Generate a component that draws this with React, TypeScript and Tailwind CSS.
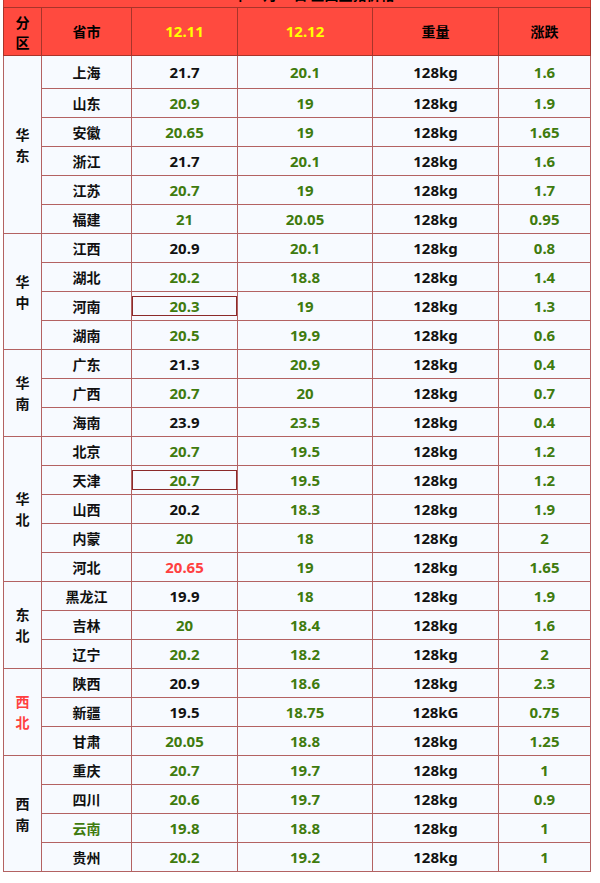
import React from "react";

type Row = { p: string; a: string; b: string; w: string; c: string; aColor?: "k" | "g" | "r"; pGreen?: boolean; boxed?: boolean };
type Region = { name: string; red?: boolean; rows: Row[] };

const regions: Region[] = [
  {
    name: "华东",
    rows: [
      { p: "上海", a: "21.7", b: "20.1", w: "128kg", c: "1.6", aColor: "k" },
      { p: "山东", a: "20.9", b: "19", w: "128kg", c: "1.9" },
      { p: "安徽", a: "20.65", b: "19", w: "128kg", c: "1.65" },
      { p: "浙江", a: "21.7", b: "20.1", w: "128kg", c: "1.6", aColor: "k" },
      { p: "江苏", a: "20.7", b: "19", w: "128kg", c: "1.7" },
      { p: "福建", a: "21", b: "20.05", w: "128kg", c: "0.95" },
    ],
  },
  {
    name: "华中",
    rows: [
      { p: "江西", a: "20.9", b: "20.1", w: "128kg", c: "0.8", aColor: "k" },
      { p: "湖北", a: "20.2", b: "18.8", w: "128kg", c: "1.4" },
      { p: "河南", a: "20.3", b: "19", w: "128kg", c: "1.3", boxed: true },
      { p: "湖南", a: "20.5", b: "19.9", w: "128kg", c: "0.6" },
    ],
  },
  {
    name: "华南",
    rows: [
      { p: "广东", a: "21.3", b: "20.9", w: "128kg", c: "0.4", aColor: "k" },
      { p: "广西", a: "20.7", b: "20", w: "128kg", c: "0.7" },
      { p: "海南", a: "23.9", b: "23.5", w: "128kg", c: "0.4", aColor: "k" },
    ],
  },
  {
    name: "华北",
    rows: [
      { p: "北京", a: "20.7", b: "19.5", w: "128kg", c: "1.2" },
      { p: "天津", a: "20.7", b: "19.5", w: "128kg", c: "1.2", boxed: true },
      { p: "山西", a: "20.2", b: "18.3", w: "128kg", c: "1.9", aColor: "k" },
      { p: "内蒙", a: "20", b: "18", w: "128Kg", c: "2" },
      { p: "河北", a: "20.65", b: "19", w: "128kg", c: "1.65", aColor: "r" },
    ],
  },
  {
    name: "东北",
    rows: [
      { p: "黑龙江", a: "19.9", b: "18", w: "128kg", c: "1.9", aColor: "k" },
      { p: "吉林", a: "20", b: "18.4", w: "128kg", c: "1.6" },
      { p: "辽宁", a: "20.2", b: "18.2", w: "128kg", c: "2" },
    ],
  },
  {
    name: "西北",
    red: true,
    rows: [
      { p: "陕西", a: "20.9", b: "18.6", w: "128kg", c: "2.3", aColor: "k" },
      { p: "新疆", a: "19.5", b: "18.75", w: "128kG", c: "0.75", aColor: "k" },
      { p: "甘肃", a: "20.05", b: "18.8", w: "128kg", c: "1.25" },
    ],
  },
  {
    name: "西南",
    rows: [
      { p: "重庆", a: "20.7", b: "19.7", w: "128kg", c: "1" },
      { p: "四川", a: "20.6", b: "19.7", w: "128kg", c: "0.9" },
      { p: "云南", a: "19.8", b: "18.8", w: "128kg", c: "1", pGreen: true },
      { p: "贵州", a: "20.2", b: "19.2", w: "128kg", c: "1" },
    ],
  },
];

const cjk = "font-['Noto_Sans_CJK_SC','Noto_Sans',sans-serif] text-[14px] font-bold";
const num = "font-['Noto_Sans','Noto_Sans_CJK_SC',sans-serif] text-[15px] font-bold";
const bd = "border border-[#b36262]";

export default function App() {
  let first = true;
  return (
    <div className="bg-white w-[600px] h-[883px] pl-[3px] pt-0">
      <div className="w-[588px]">
        <div className="h-[7px] bg-[#ff4a3f] overflow-hidden border-x border-[#c0392f] relative">
          <div className={`${cjk} text-black text-center leading-[20px] mt-[-16px]`}>2019年12月12日 全国生猪价格</div>
        </div>
        <table className="table-fixed border-collapse w-[588px]">
          <colgroup>
            <col className="w-[38px]" />
            <col className="w-[90px]" />
            <col className="w-[106px]" />
            <col className="w-[135px]" />
            <col className="w-[126px]" />
            <col className="w-[92px]" />
          </colgroup>
          <thead>
            <tr className="h-[48px] bg-[#ff4a3f]">
              <th className={`border border-[#a8342a] ${cjk} text-black leading-[20px] p-0`}>
                <div>分</div>
                <div>区</div>
              </th>
              <th className={`border border-[#a8342a] ${cjk} text-black p-0`}>省市</th>
              <th className={`border border-[#a8342a] ${num} text-[#ffff00] p-0`}>12.11</th>
              <th className={`border border-[#a8342a] ${num} text-[#ffff00] p-0`}>12.12</th>
              <th className={`border border-[#a8342a] ${cjk} text-black p-0`}>重量</th>
              <th className={`border border-[#a8342a] ${cjk} text-black p-0`}>涨跌</th>
            </tr>
          </thead>
          <tbody className="bg-[#f7faff]">
            {regions.map((reg) =>
              reg.rows.map((r, i) => {
                const h = first ? "h-[33px]" : "h-[29px]";
                first = false;
                const aCls =
                  r.aColor === "k" ? "text-[#111111]" : r.aColor === "r" ? "text-[#ff4040]" : "text-[#3f7b0e]";
                return (
                  <tr key={r.p} className={h}>
                    {i === 0 && (
                      <td
                        rowSpan={reg.rows.length}
                        className={`${bd} ${cjk} leading-[21px] text-center p-0 ${reg.red ? "text-[#ff4040]" : "text-[#111111]"}`}
                      >
                        <div>{reg.name[0]}</div>
                        <div>{reg.name[1]}</div>
                      </td>
                    )}
                    <td className={`${bd} ${cjk} text-center p-0 ${r.pGreen ? "text-[#3f7b0e]" : "text-[#111111]"}`}>{r.p}</td>
                    <td className={`${bd} ${num} ${aCls} text-center p-0`}>
                      {r.boxed ? (
                        <div className="h-[20px] w-full border border-[#8c2a2a] flex items-center justify-center">{r.a}</div>
                      ) : (
                        r.a
                      )}
                    </td>
                    <td className={`${bd} ${num} text-[#3f7b0e] text-center p-0`}>{r.b}</td>
                    <td className={`${bd} ${num} text-[#111111] text-center p-0`}>{r.w}</td>
                    <td className={`${bd} ${num} text-[#3f7b0e] text-center p-0`}>{r.c}</td>
                  </tr>
                );
              })
            )}
          </tbody>
        </table>
      </div>
    </div>
  );
}
